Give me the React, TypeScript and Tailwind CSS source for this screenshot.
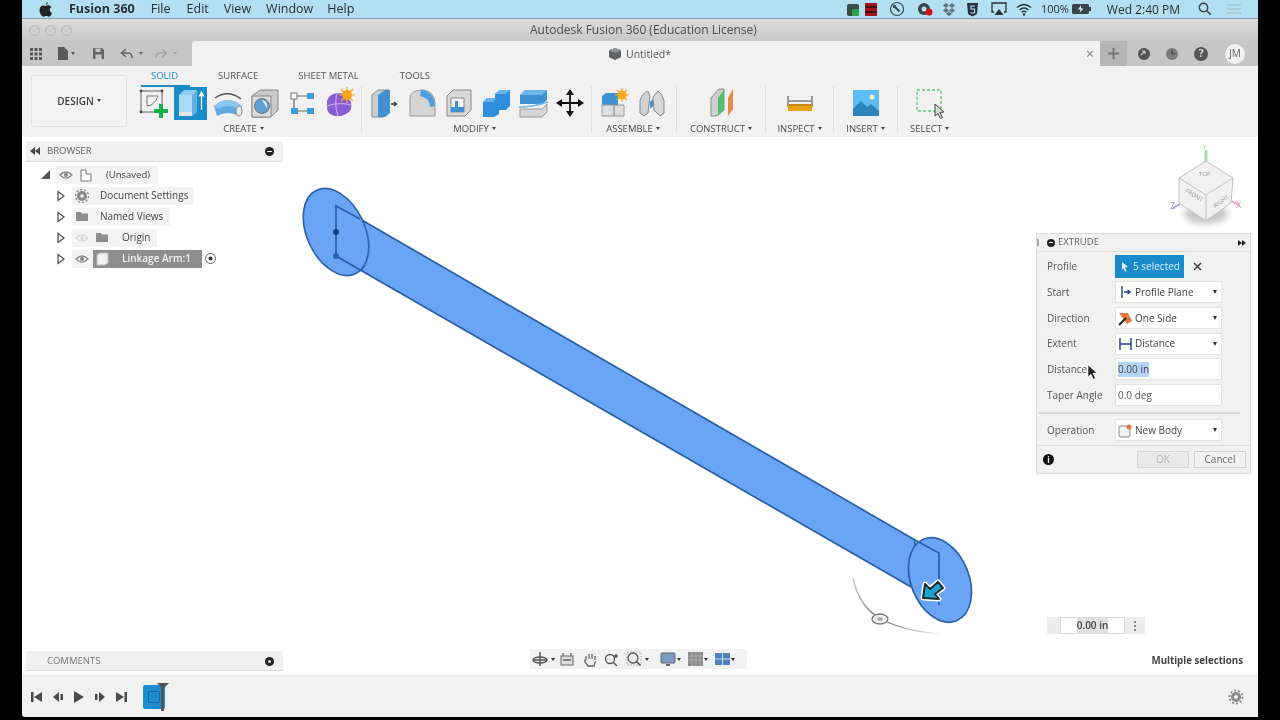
import React from "react";

const font = { fontFamily: '"Open Sans","Liberation Sans",sans-serif' };

type P = { children: React.ReactNode; w?: number; h?: number; vb?: string; className?: string };
const S = ({ children, w = 32, h = 32, vb, className }: P) => (
  <svg width={w} height={h} viewBox={vb ?? `0 0 ${w} ${h}`} className={className ?? "shrink-0"}>
    {children}
  </svg>
);

const Caret = () => <span className="inline-block ml-[3px] mb-[2px] w-0 h-0 border-x-[2.5px] border-x-transparent border-t-[3.5px] border-t-[#444]" />;

const Sketch = () => (
  <S>
    <rect x="3" y="4" width="21" height="21" fill="none" stroke="#666" strokeWidth="1" />
    <path d="M9 9h11M9 9v10q7 0 11-10" fill="none" stroke="#777" strokeWidth="1" />
    <path d="M21 17h4v5h5v4h-5v5h-4v-5h-5v-4h5z" fill="#18b04a" />
    <g fill="#444"><circle cx="3" cy="4" r="1.4" /><circle cx="24" cy="4" r="1.4" /><circle cx="3" cy="25" r="1.4" /></g>
  </S>
);
const Extrude = () => (
  <div className="w-[33px] h-[33px] bg-[#1b8cc8] flex items-center justify-center">
    <S w={30} h={30}>
      <path d="M3 7l5-5h13v22l-5 4H3z" fill="#8fcdf4" />
      <path d="M3 7h13v21H3z" fill="#a9dbf8" />
      <path d="M16 7l5-5v22l-5 4z" fill="#5fb0e4" />
      <path d="M3 24h13v4H3z" fill="#e5e5e5" />
      <path d="M25.5 22V5M23.5 8l2-4 2 4z" stroke="#fff" strokeWidth="1.2" fill="#fff" />
    </S>
  </div>
);
const Revolve = () => (
  <S>
    <path d="M3 11q13-9 26 1" fill="none" stroke="#555" strokeWidth="1.5" />
    <path d="M2 19q14-12 28 0l-3 10q-11-6-22 0z" fill="#5ea9e2" />
    <path d="M2 19q14-12 28 0l-4 3q-10-6-20 0z" fill="#8cc6ef" />
    <ellipse cx="27" cy="24" rx="3" ry="5" fill="#eee" stroke="#888" />
  </S>
);
const Hole = () => (
  <S>
    <path d="M3 9l8-6h18v20l-7 7H3z" fill="#c9c9c9" stroke="#888" />
    <path d="M3 9h19v21H3z" fill="#dcdcdc" stroke="#888" />
    <circle cx="13" cy="19" r="7.5" fill="#5f9fd4" stroke="#777" />
    <path d="M13 13a6 6 0 0 1 5 8z" fill="#d9ecf8" />
  </S>
);
const Pattern = () => (
  <S>
    <rect x="5" y="6" width="6" height="6" fill="#fff" stroke="#777" />
    <rect x="21" y="6" width="7" height="6" fill="#3e9ad8" />
    <rect x="5" y="21" width="7" height="6" fill="#3e9ad8" />
    <rect x="21" y="21" width="7" height="6" fill="#3e9ad8" />
    <path d="M11 9h10M8 12v9M12 24h9" stroke="#666" strokeWidth="1.2" />
  </S>
);
const Form = () => (
  <S>
    <path d="M4 14q2-7 10-8l8 1 6 8q2 9-5 12-7 4-14 1-5-2-5-8z" fill="#8b5bd6" />
    <path d="M4 19q12-4 24-1M14 6q-3 12 1 23" stroke="#c3a8ec" strokeWidth="1.2" fill="none" />
    <circle cx="24" cy="8" r="5" fill="#f7a81c" />
    <path d="M24 0v16M16 8h16M18 2l12 12M30 2L18 14" stroke="#f7a81c" strokeWidth="1.2" />
  </S>
);
const Press = () => (
  <S>
    <path d="M3 8l6-5h11v23l-6 4H3z" fill="#cfcfcf" stroke="#888" />
    <path d="M9 8l7-5h5v23l-5 4H9z" fill="#3e92d4" />
    <path d="M22 17h5M25 15l2.500 2-2.500 2" stroke="#333" strokeWidth="1.3" fill="none" />
  </S>
);
const Fillet = () => (
  <S>
    <path d="M4 29V11q1-8 12-8h2q11 2 11 14v12z" fill="#d5d5d5" stroke="#999" />
    <path d="M15 3q13 1 14 16l-5 1q0-9-10-11z" fill="#4e9ddc" />
  </S>
);
const Shell = () => (
  <S>
    <path d="M4 9l6-6h18v20l-6 6H4z" fill="#d8d8d8" stroke="#888" />
    <path d="M8 11h13v14H8z" fill="#f3f3f3" stroke="#888" />
    <path d="M12 14h3v6h6v5H8v-5h4z" fill="#3e92d4" />
  </S>
);
const Combine = () => (
  <S>
    <path d="M3 15l4-4h8V7l5-4h10v16l-4 4h-7v4l-5 3H3z" fill="#2f8fdc" />
    <path d="M15 7l5-4h10l-4 4zM3 15l4-4h9l-3 4z" fill="#66b4ee" />
  </S>
);
const Split = () => (
  <S>
    <path d="M3 8l5-5h22v10l-5 4H3z" fill="#3e92d4" />
    <path d="M3 8l5-5h22l-5 5z" fill="#6db7ea" />
    <path d="M2 20q14 0 29-5" stroke="#6db7ea" strokeWidth="1.5" fill="none" />
    <path d="M3 22h22l5-5v8l-5 5H3z" fill="#d6d6d6" stroke="#999" />
  </S>
);
const Move = () => (
  <S>
    <path d="M16 4v24M4 16h24" stroke="#111" strokeWidth="1.8" />
    <path d="M16 2l-4 6h8zM16 30l-4-6h8zM2 16l6-4v8zM30 16l-6-4v8z" fill="#111" />
  </S>
);
const NewComp = () => (
  <S>
    <path d="M4 9l4-3h12v12H4z" fill="#3e92d4" />
    <path d="M4 18h12v11H4zM16 18h10v11H16z" fill="#dedede" stroke="#999" />
    <circle cx="24" cy="8" r="4.5" fill="#f7a81c" />
    <path d="M24 1v14M17 8h14M19 3l10 10M29 3L19 13" stroke="#f7a81c" strokeWidth="1.2" />
  </S>
);
const Joint = () => (
  <S>
    <path d="M4 14q2-8 8-10l2 5-2 17-4 3-4-3z" fill="#d0d0d0" stroke="#888" />
    <path d="M28 14q-2-8-6-10l-5 6 1 13 6 6 4-3z" fill="#d8d8d8" stroke="#888" />
    <path d="M14 15l3-3v7l-3 3z" fill="#3e92d4" />
  </S>
);
const Construct = () => (
  <S>
    <path d="M6 11l8-9h5v21l-8 6H6z" fill="#cfcfcf" stroke="#888" />
    <path d="M13 11l6-8v20l-6 6z" fill="#4fbf70" />
    <path d="M23 11l5-9v20l-5 7z" fill="#e58a50" />
  </S>
);
const Inspect = () => (
  <S>
    <path d="M4 9v11M28 9v11M5 14h22" stroke="#444" strokeWidth="1" />
    <path d="M4 17h24v7H4z" fill="#e8a21d" />
    <path d="M4 17h24v2H4z" fill="#c98a12" />
  </S>
);
const Insert = () => (
  <S w={28} h={32} vb="0 0 28 32">
    <rect x="1" y="3" width="26" height="26" fill="#5cbcf5" />
    <circle cx="20" cy="10" r="2.5" fill="#f8f3c2" />
    <path d="M1 22l8-8 6 6 4-3 8 7v5H1z" fill="#2f83bd" />
  </S>
);
const Select = () => (
  <S>
    <rect x="3" y="3" width="24" height="21" fill="none" stroke="#5cc27c" strokeWidth="1.3" strokeDasharray="3 2" />
    <path d="M21 17l9 8-4 .5 2.5 5-2 1-2.5-5-3 2.5z" fill="#d8d8d8" stroke="#444" strokeWidth="1" />
  </S>
);

const Sep = () => <div className="w-px h-[46px] bg-[#dedede] mt-[1px] shrink-0" />;

const Tool = ({ children, w = 37 }: { children: React.ReactNode; w?: number }) => (
  <div className="h-[36px] flex items-center justify-center shrink-0" style={{ width: w }}>
    {children}
  </div>
);

const Group = ({ label, w, left = false, children }: { label: string; w: number; left?: boolean; children: React.ReactNode }) => (
  <div className="flex flex-col items-center shrink-0" style={{ width: w }}>
    <div className="flex justify-center">{children}</div>
    <div className={`text-[9.5px] leading-[12px] mt-[2px] text-[#4a4a4a] whitespace-nowrap flex items-center ${left ? "mr-[5px]" : ""}`}>
      {label}
      <Caret />
    </div>
  </div>
);

const Eye = ({ c = "#8a8a8a" }: { c?: string }) => (
  <S w={14} h={10}>
    <path d="M1 5q6-6 12 0q-6 6-12 0z" fill="none" stroke={c} strokeWidth="1.2" />
    <circle cx="7" cy="5" r="2" fill={c} />
  </S>
);
const Folder = () => (
  <S w={14} h={11}>
    <path d="M1 1h5l1 1.5h6V10H1z" fill="#8d8d8d" />
  </S>
);
const Tri = () => (
  <S w={10} h={12}>
    <path d="M2 1.5l6 4.5-6 4.5z" fill="#fff" stroke="#555" strokeWidth="1.3" />
  </S>
);
const Row = ({ children, w }: { children: React.ReactNode; w: number }) => (
  <div className="h-[21px] flex items-center pl-[30px]">
    <Tri />
    <div className="ml-[6px] h-[18px] bg-[#f3f3f3] flex items-center pl-[2px] text-[10px] text-[#444]" style={{ width: w }}>
      {children}
    </div>
  </div>
);

const Select2 = ({ icon, label }: { icon: React.ReactNode; label: string }) => (
  <div className="w-[107px] h-[22px] bg-white border border-[#e4e4e4] flex items-center pl-[1px] pr-[4px]">
    <div className="w-[17px] flex justify-center">{icon}</div>
    <span className="text-[#444] ml-[1px]">{label}</span>
    <span className="ml-auto w-0 h-0 border-x-[2.5px] border-x-transparent border-t-[4px] border-t-[#333]" />
  </div>
);
const DRow = ({ label, children, h = 26 }: { label: string; children: React.ReactNode; h?: number }) => (
  <div className="flex items-center pl-[10px]" style={{ height: h }}>
    <span className="w-[68px] text-[#555]">{label}</span>
    {children}
  </div>
);

const SmallCaret = ({ cls }: { cls: string }) => (
  <span className={`${cls} w-0 h-0 border-x-[2.5px] border-x-transparent border-t-[3.5px] border-t-[#333]`} />
);

export default function App() {
  return (
    <div className="w-[1280px] h-[720px] bg-black overflow-hidden blur-[0.6px]" style={font}>
      <div className="w-[1236px] h-[717px] ml-[22px] flex flex-col">
        {/* macOS menu bar */}
        <div className="h-[19px] bg-[#b2dff2] border-b border-[#7fa3b5] flex items-center text-[12.5px] text-[#2b2f33] shrink-0 relative">
          <svg width="13" height="15" viewBox="0 0 13 15" className="ml-[17px]">
            <path d="M9 0q.1 2-2.2 3Q6.700 1 9 0zM6.500 4c1 0 1.600-.7 3-.7q1.800 0 2.900 1.600-2 1.200-1.700 3.200t2.300 3q-1.400 3.700-3.100 3.700c-1.100 0-1.500-.7-2.600-.7s-1.600.7-2.600.7C2.600 14.800.5 11 .5 8.300.5 5.200 2.500 3.400 4 3.400c1 0 1.900.6 2.500.6z" fill="#222" />
          </svg>
          <span className="ml-[17px] font-bold pt-[1px]">Fusion 360</span>
          <span className="ml-[16px] pt-[1px]">File</span>
          <span className="ml-[16px] pt-[1px]">Edit</span>
          <span className="ml-[15px] pt-[1px]">View</span>
          <span className="ml-[15px] pt-[1px]">Window</span>
          <span className="ml-[14px] pt-[1px]">Help</span>
          <div className="ml-auto flex items-center pr-[16px]">
            <S w={14} h={15}><rect x="1" y="2" width="12" height="12" rx="2" fill="#3c4b44" /><rect x="6" y="7" width="7" height="7" rx="1" fill="#27a64a" /></S>
            <S w={14} h={15} className="ml-[4px]"><rect x="1" y="1" width="12" height="13" fill="#a4161a" /><path d="M1 5h12M1 10h12" stroke="#2a0808" strokeWidth="1.500" /></S>
            <S w={16} h={16} className="ml-[11px]"><circle cx="8" cy="8" r="6.500" fill="none" stroke="#3a4a55" strokeWidth="1.200" /><path d="M6 6l4.500 4.500" stroke="#3a4a55" strokeWidth="2" /><circle cx="5.500" cy="5.500" r="1.800" fill="#3a4a55" /></S>
            <S w={16} h={16} className="ml-[12px]"><circle cx="7" cy="8" r="6" fill="#3c4248" /><circle cx="7" cy="8" r="2.500" fill="#b2dff2" /><circle cx="12" cy="11" r="3.500" fill="#d0121b" /></S>
            <S w={14} h={14} className="ml-[9px]"><path d="M4 1l3 2.500L4 6 1 3.500zM10 1l3 2.500L10 6 7 3.500zM4 6l3 2.500L4 11 1 8.500zM10 6l3 2.500L10 11 7 8.500zM7 9.500L10 12l-3 2-3-2z" fill="#5d7380" /></S>
            <S w={13} h={15} className="ml-[10px]"><path d="M1 1h11l-1 11-4.500 2.500L2 12z" fill="#28323a" /><path d="M9 4H5v3h3.500v3.500l-2 .7-2-.7" stroke="#b2dff2" strokeWidth="1.200" fill="none" /></S>
            <S w={16} h={14} className="ml-[12px]"><path d="M3 10H1V1h14v9h-2" fill="none" stroke="#28323a" strokeWidth="1.300" /><path d="M8 7l4.500 6h-9z" fill="#28323a" /></S>
            <S w={16} h={13} className="ml-[9px]"><path d="M1 4.500q7-6 14 0M3.500 7q4.500-4 9 0M5.800 9.300q2.200-2 4.400 0" fill="none" stroke="#28323a" strokeWidth="1.400" /><circle cx="8" cy="11.500" r="1.200" fill="#28323a" /></S>
            <span className="ml-[9px] text-[11px]">100%</span>
            <S w={19} h={10} className="ml-[3px]"><rect x="0" y="0" width="17" height="10" rx="1.500" fill="#3a4248" /><rect x="17" y="3" width="2" height="4" fill="#3a4248" /><path d="M9 1L6 5.500h2.500L7.500 9l4-4.500H9z" fill="#d8eef8" /></S>
            <span className="ml-[16px] text-[12px] pt-[1px]">Wed 2:40 PM</span>
            <S w={14} h={14} className="ml-[18px]"><circle cx="5.500" cy="5.500" r="4.200" fill="none" stroke="#3a4248" strokeWidth="1.400" /><path d="M8.800 8.800l4 4" stroke="#3a4248" strokeWidth="1.600" /></S>
            <S w={16} h={12} className="ml-[14px]"><path d="M1 2h14M1 6h14M1 10h14" stroke="#a9c4d0" strokeWidth="1.300" /></S>
          </div>
        </div>

        {/* window title */}
        <div className="h-[22px] bg-gradient-to-b from-[#dcdcdc] to-[#c8c8c8] flex items-center relative shrink-0">
          <div className="flex gap-[5px] ml-[7px]">
            <span className="w-[11px] h-[11px] rounded-full bg-[#cfcfcf] border border-[#b9b9b9]" />
            <span className="w-[11px] h-[11px] rounded-full bg-[#cfcfcf] border border-[#b9b9b9]" />
            <span className="w-[11px] h-[11px] rounded-full bg-[#cfcfcf] border border-[#b9b9b9]" />
          </div>
          <span className="absolute left-[508px] text-[12px] text-[#4c4c4c] whitespace-nowrap">Autodesk Fusion 360 (Education License)</span>
        </div>

        {/* tab row */}
        <div className="h-[25px] bg-[#c6c6c6] flex shrink-0">
          <div className="w-[170px] flex items-center pl-[7px]">
            <S w={14} h={14}>
              <g fill="#555">
                <rect x="1" y="1" width="3" height="3" /><rect x="5.500" y="1" width="3" height="3" /><rect x="10" y="1" width="3" height="3" />
                <rect x="1" y="5.500" width="3" height="3" /><rect x="5.500" y="5.500" width="3" height="3" /><rect x="10" y="5.500" width="3" height="3" />
                <rect x="1" y="10" width="3" height="3" /><rect x="5.500" y="10" width="3" height="3" /><rect x="10" y="10" width="3" height="3" />
              </g>
            </S>
            <S w={12} h={15} className="ml-[14px]"><path d="M1 1h6l4 4v9H1z" fill="#5a5a5a" /></S>
            <span className="ml-[2px] w-0 h-0 border-x-[2.500px] border-x-transparent border-t-[3.500px] border-t-[#555]" />
            <S w={13} h={13} className="ml-[17px]"><path d="M1 1h9l2 2v9H1z" fill="#666" /><rect x="3.500" y="1.500" width="5" height="3.500" fill="#c6c6c6" /><rect x="3.500" y="7.500" width="6" height="4.500" fill="#c6c6c6" /></S>
            <S w={14} h={12} className="ml-[15px]"><path d="M6 1L1.500 5 6 9M2 5h6q4 0 4 5" fill="none" stroke="#666" strokeWidth="1.500" /></S>
            <span className="ml-[5px] w-0 h-0 border-x-[2.500px] border-x-transparent border-t-[3.500px] border-t-[#666]" />
            <S w={14} h={12} className="ml-[11px]"><path d="M8 1l4.500 4L8 9M12 5H6q-4 0-4 5" fill="none" stroke="#a5a5a5" strokeWidth="1.500" /></S>
            <span className="ml-[5px] w-0 h-0 border-x-[2.500px] border-x-transparent border-t-[3.500px] border-t-[#a0a0a0]" />
          </div>
          <div className="w-[908px] bg-[#f2f2f2] rounded-tl-[3px] flex items-center relative">
            <S w={14} h={14} className="ml-[416px] mt-[1px]"><path d="M7 1l6 2.200v7L7 13 1 10.200v-7z" fill="#5f6468" /><path d="M7 6L1 3.200 7 1l6 2.200z" fill="#8d9296" /></S>
            <span className="ml-[4px] mt-[2px] text-[10.5px] text-[#555]">Untitled*</span>
            <span className="ml-auto mr-[6px] mt-[1px] text-[14px] leading-none text-[#777]">×</span>
          </div>
          <div className="flex-1 flex items-center">
            <div className="w-[27px] h-[25px] bg-[#b5b5b5] flex items-center justify-center">
              <S w={13} h={13}><path d="M6.500 1v11M1 6.500h11" stroke="#777" strokeWidth="2" /></S>
            </div>
            <S w={14} h={14} className="ml-[10px]"><circle cx="7" cy="7" r="6" fill="#545454" /><path d="M4 8l4-4M8 4H5M8 4v3" stroke="#c6c6c6" strokeWidth="1.200" fill="none" /></S>
            <S w={14} h={14} className="ml-[14px]"><circle cx="7" cy="7" r="6" fill="#7a7a7a" /><path d="M7 3.500V7h3" stroke="#444" strokeWidth="1.200" fill="none" /></S>
            <div className="ml-[15px] w-[14px] h-[14px] rounded-full bg-[#555] text-[#d8d8d8] text-[11px] font-bold flex items-center justify-center">?</div>
            <div className="ml-[17px] w-[20px] h-[20px] rounded-full bg-[#f2f2f2] text-[#666] text-[10px] flex items-center justify-center">JM</div>
          </div>
        </div>

        {/* ribbon */}
        <div className="h-[71px] bg-[#f1f1f1] flex shrink-0">
          <div className="ml-[9px] mt-[9px] w-[96px] h-[52px] border border-[#e2e2e2] rounded-[3px] bg-[#f3f3f3] flex items-center justify-center pt-[1px] text-[10px] font-semibold text-[#444] shrink-0">
            DESIGN
            <Caret />
          </div>
          <div className="ml-[8px] flex flex-col flex-1">
            <div className="h-[19px] flex items-center pt-[1px] text-[9.5px] text-[#555] whitespace-nowrap">
              <span className="ml-[16px] text-[#1b8cc8]">SOLID</span>
              <span className="ml-[40px]">SURFACE</span>
              <span className="ml-[40px]">SHEET METAL</span>
              <span className="ml-[41px]">TOOLS</span>
            </div>
            <div className="flex relative">
              <div className="absolute left-[6px] top-0 w-[49px] h-[2px] bg-[#1b8cc8]" />
              <Group label="CREATE" w={222} left>
                <Tool><Sketch /></Tool>
                <Tool><Extrude /></Tool>
                <Tool><Revolve /></Tool>
                <Tool><Hole /></Tool>
                <Tool><Pattern /></Tool>
                <Tool><Form /></Tool>
              </Group>
              <div className="w-[4px]" />
              <Sep />
              <div className="w-[4px]" />
              <Group label="MODIFY" w={222} left>
                <Tool><Press /></Tool>
                <Tool><Fillet /></Tool>
                <Tool><Shell /></Tool>
                <Tool><Combine /></Tool>
                <Tool><Split /></Tool>
                <Tool><Move /></Tool>
              </Group>
              <div className="w-[3px]" />
              <Sep />
              <div className="w-[3px]" />
              <Group label="ASSEMBLE" w={76}>
                <Tool w={38}><NewComp /></Tool>
                <Tool w={38}><Joint /></Tool>
              </Group>
              <div className="w-[5px]" />
              <Sep />
              <Group label="CONSTRUCT" w={88}>
                <Tool w={40}><Construct /></Tool>
              </Group>
              <Sep />
              <Group label="INSPECT" w={67}>
                <Tool w={40}><Inspect /></Tool>
              </Group>
              <Sep />
              <Group label="INSERT" w={63}>
                <Tool w={40}><Insert /></Tool>
              </Group>
              <Sep />
              <Group label="SELECT" w={63}>
                <Tool w={40}><Select /></Tool>
              </Group>
            </div>
          </div>
        </div>

        {/* canvas */}
        <div className="flex-1 bg-white relative min-h-0">
          {/* 3D model */}
          <svg className="absolute left-0 top-0" width="1236" height="538" viewBox="22 137 1236 538">
            <defs>
              <linearGradient id="arc" x1="0" y1="0" x2="1" y2="0">
                <stop offset="0" stopColor="#c4c4c4" />
                <stop offset="0.3" stopColor="#666" />
                <stop offset="1" stopColor="#fff" />
              </linearGradient>
            </defs>
            <path d="M853 578q6 30 30 42q24 12 60 14" fill="none" stroke="url(#arc)" strokeWidth="1.300" />
            <ellipse cx="880" cy="619" rx="8" ry="5" fill="#eee" stroke="#777" strokeWidth="1.300" />
            <ellipse cx="880" cy="619" rx="3" ry="1.800" fill="#aaa" />
            <path d="M360 219L915 540L913 588L362 271z" fill="#6aa4f5" stroke="#2660a8" strokeWidth="1.700" />
            <ellipse cx="940" cy="580" rx="29" ry="44" transform="rotate(-22 940 580)" fill="#6aa4f5" stroke="#2a62ab" strokeWidth="1.700" />
            <ellipse cx="336" cy="232" rx="29" ry="46" transform="rotate(-25 336 232)" fill="#6aa4f5" stroke="#2a62ab" strokeWidth="1.700" />
            <path d="M360 219L336 206V256L362 271" fill="none" stroke="#2660a8" strokeWidth="1.700" />
            <path d="M915 540L939 553V605" fill="none" stroke="#2660a8" strokeWidth="1.700" />
            <circle cx="336" cy="232" r="3" fill="#16407c" />
            <circle cx="336" cy="256" r="3" fill="#2a62ab" />
            <path d="M923 598L925 584L930 589L938 582L943 588L935 594L939 599Z" fill="#fff" stroke="#fff" strokeWidth="5" strokeLinejoin="round" />
            <path d="M923 598L925 584L930 589L938 582L943 588L935 594L939 599Z" fill="#1ea3cf" stroke="#1d2b33" strokeWidth="2" strokeLinejoin="round" />
            {/* view cube */}
            <ellipse cx="1206" cy="214" rx="22" ry="10" fill="#c8c8c8" className="blur-[3px]" />
            <path d="M1206 164v-14" stroke="#9fe3ac" strokeWidth="3" />
            <path d="M1180 204l-7 4" stroke="#9f9be6" strokeWidth="1.500" />
            <path d="M1232 201l8 5" stroke="#eda9b5" strokeWidth="2" />
            <path d="M1179 178l27-17 27 17-2 25-25 18-27-18z" fill="#f1f1f1" stroke="#c0c0c0" />
            <path d="M1179 178l27 17 27-17M1206 195v26" fill="none" stroke="#c0c0c0" />
            <text x="1199" y="176" fontSize="6" fill="#999">TOP</text>
            <text x="1184" y="195" fontSize="6" fill="#999" transform="rotate(30 1190 195)">FRONT</text>
            <text x="1211" y="205" fontSize="6" fill="#999" transform="rotate(-35 1218 200)">RIGHT</text>
            <text x="1203" y="149" fontSize="6" fill="#7fd58e">Y</text>
            <text x="1170" y="209" fontSize="9" fill="#8f8ae0">Z</text>
            <text x="1236" y="208" fontSize="9" fill="#e493a4">X</text>
          </svg>

          {/* browser */}
          <div className="absolute left-[4px] top-[4px] w-[257px] text-[#555]">
            <div className="h-[21px] bg-[#f0f0f0] border-b border-[#dcdcdc] flex items-center text-[9.5px]">
              <S w={10} h={8} className="ml-[4px]"><path d="M5 0v8L0 4zM10 0v8L5 4z" fill="#444" /></S>
              <span className="ml-[7px] text-[#666]">BROWSER</span>
              <span className="ml-auto mr-[9px] w-[9px] h-[9px] rounded-full bg-[#222] flex items-center justify-center"><span className="w-[5px] h-[1px] bg-white" /></span>
            </div>
            <div className="mt-[2px]">
              <div className="h-[21px] flex items-center pl-[14px]">
                <S w={12} h={11}><path d="M1 10L10 1v9z" fill="#555" /></S>
                <div className="ml-[4px] w-[102px] h-[18px] bg-[#f3f3f3] flex items-center pl-[3px] text-[9.5px] text-[#444]">
                  <Eye />
                  <S w={14} h={14} className="ml-[6px]"><path d="M2 2h5v4h5v7H2z" fill="#fff" stroke="#777" /></S>
                  <span className="ml-[13px] pt-[1px]">(Unsaved)</span>
                </div>
              </div>
              <Row w={122}>
                <S w={14} h={14} className="ml-[1px]"><circle cx="7" cy="7" r="5" fill="#8a8a8a" /><circle cx="7" cy="7" r="6.500" fill="none" stroke="#8a8a8a" strokeWidth="1.500" strokeDasharray="2 2" /><circle cx="7" cy="7" r="1.800" fill="#f3f3f3" /></S>
                <span className="ml-[11px]">Document Settings</span>
              </Row>
              <Row w={98}>
                <span className="ml-[1px] flex"><Folder /></span>
                <span className="ml-[11px]">Named Views</span>
              </Row>
              <Row w={85}>
                <span className="ml-[1px] flex"><Eye c="#dcdcdc" /></span>
                <span className="ml-[6px] flex"><Folder /></span>
                <span className="ml-[13px]">Origin</span>
              </Row>
              <div className="h-[21px] flex items-center pl-[30px]">
                <Tri />
                <div className="ml-[6px] w-[130px] h-[18px] bg-[#f3f3f3] flex items-center pl-[3px] text-[10px]">
                  <Eye />
                  <div className="ml-[4px] w-[109px] h-[18px] bg-[#8e8e8e] flex items-center pl-[3px]">
                    <S w={13} h={14}><path d="M1 3l3-2h8v10l-3 2H1z" fill="#f2f2f2" stroke="#bbb" /></S>
                    <span className="ml-[13px] font-semibold text-[#f2f2f2] whitespace-nowrap">Linkage Arm:1</span>
                  </div>
                </div>
                <S w={13} h={13} className="ml-[2px]"><circle cx="6.500" cy="6.500" r="5" fill="#fff" stroke="#666" /><circle cx="6.500" cy="6.500" r="2" fill="#333" /></S>
              </div>
            </div>
          </div>

          {/* extrude dialog */}
          <div className="absolute left-[1014px] top-[96px] w-[215px] h-[241px] bg-[#f1f1f1] border border-[#dcdcdc] text-[10px] flex flex-col">
            <div className="h-[18px] border-b border-[#dddddd] flex items-center shrink-0">
              <span className="w-[2px] h-[7px] bg-[#aaa]" />
              <span className="ml-[8px] w-[8px] h-[8px] rounded-full bg-[#222] flex items-center justify-center"><span className="w-[4px] h-[1px] bg-white" /></span>
              <span className="ml-[3px] text-[#666] text-[9.5px]">EXTRUDE</span>
              <S w={8} h={6} className="ml-auto mr-[4px]"><path d="M0 0v6l4-3zM4 0v6l4-3z" fill="#222" /></S>
            </div>
            <div className="pt-[1px]">
              <DRow label="Profile">
                <div className="w-[69px] h-[23px] bg-[#1a8ccb] text-[#d9eef9] flex items-center pl-[6px]">
                  <S w={8} h={11}><path d="M1 1l6 5-3 .3L5.500 10l-1.500.7L2.500 7 1 9z" fill="#e8f3fa" /></S>
                  <span className="ml-[4px] whitespace-nowrap">5 selected</span>
                </div>
                <S w={9} h={9} className="ml-[9px]"><path d="M1 1l7 7M8 1L1 8" stroke="#333" strokeWidth="1.400" /></S>
              </DRow>
              <DRow label="Start">
                <Select2 label="Profile Plane" icon={<S w={12} h={14}><path d="M2 1v12M4 7h6M7.500 5l2.500 2-2.500 2" stroke="#25477a" strokeWidth="1.400" fill="none" /></S>} />
              </DRow>
              <DRow label="Direction">
                <Select2 label="One Side" icon={<S w={15} h={15}><path d="M1 2h9l4 8-5 3z" fill="#e2773f" /><path d="M1 14l7-7" stroke="#222" strokeWidth="2" /></S>} />
              </DRow>
              <DRow label="Extent" h={25}>
                <Select2 label="Distance" icon={<S w={13} h={14}><path d="M1 1v12M12 1v12M1.500 7h10" stroke="#25477a" strokeWidth="1.500" /></S>} />
              </DRow>
              <DRow label="Distance">
                <div className="w-[107px] h-[22px] bg-white border border-[#e4e4e4] flex items-center pl-[2px] text-[#444]">
                  <span className="bg-[#b5d5f7]">0.00 in</span>
                </div>
              </DRow>
              <DRow label="Taper Angle">
                <div className="w-[107px] h-[22px] bg-white border border-[#e4e4e4] flex items-center pl-[2px] text-[#555]">0.0 deg</div>
              </DRow>
            </div>
            <div className="mt-[4px] ml-[2px] w-[201px] h-[2px] bg-[#d6d6d6]" />
            <div className="mt-[3px]">
              <DRow label="Operation">
                <Select2 label="New Body" icon={<S w={15} h={15}><rect x="1" y="3" width="11" height="11" rx="2" fill="#f2f2f2" stroke="#888" /><circle cx="11" cy="4" r="2.500" fill="#e2773f" /></S>} />
              </DRow>
            </div>
            <div className="mt-[2px] border-t border-[#dddddd] flex-1 flex items-center pl-[6px] pr-[4px]">
              <span className="w-[11px] h-[11px] rounded-full bg-[#111] text-white text-[8px] font-bold flex items-center justify-center">i</span>
              <div className="ml-auto w-[52px] h-[17px] bg-[#e9e9e9] border border-[#d8d8d8] text-[#b5b5b5] flex items-center justify-center">OK</div>
              <div className="ml-[5px] w-[52px] h-[17px] bg-[#f2f2f2] border border-[#d0d0d0] text-[#666] flex items-center justify-center">Cancel</div>
            </div>
          </div>

          {/* mouse pointer */}
          <S w={12} h={16} className="absolute left-[1065px] top-[227px]"><path d="M1 1l9 8-4 .3 2.500 5-2 1L4 10.300 1 13z" fill="#222" stroke="#fff" strokeWidth="0.600" /></S>

          {/* floating value */}
          <div className="absolute left-[1025px] top-[480px] w-[98px] h-[17px] bg-[#ececec] flex items-center text-[10px] font-semibold text-[#444]">
            <div className="ml-[13px] w-[65px] h-[17px] bg-white border border-[#dcdcdc] flex items-center justify-center">
              <span className="bg-[#e2e2e2]">0.00 in</span>
            </div>
            <div className="ml-[9px] flex flex-col gap-[2px]">
              <span className="w-[2px] h-[2px] rounded-full bg-[#666]" />
              <span className="w-[2px] h-[2px] rounded-full bg-[#666]" />
              <span className="w-[2px] h-[2px] rounded-full bg-[#666]" />
            </div>
          </div>

          {/* comments */}
          <div className="absolute left-[4px] bottom-[4px] w-[257px] h-[20px] bg-[#f0f0f0] border-b border-[#dcdcdc] flex items-center pt-[1px] text-[9.5px] text-[#777]">
            <span className="ml-[21px]">COMMENTS</span>
            <span className="ml-auto mr-[9px] w-[9px] h-[9px] rounded-full bg-[#222] flex items-center justify-center"><span className="w-[3px] h-[3px] rounded-full bg-[#ddd]" /></span>
          </div>

          {/* nav bar */}
          <div className="absolute left-[508px] bottom-[6px] w-[217px] h-[20px] bg-[#f2f2f2] flex items-center pl-[1px]">
            <S w={18} h={18}><path d="M9 2v14M2 10h14" stroke="#555" strokeWidth="1.500" /><ellipse cx="9" cy="10" rx="7" ry="3" fill="none" stroke="#555" strokeWidth="1.500" /></S>
            <SmallCaret cls="ml-[2px]" />
            <S w={16} h={16} className="ml-[4px]"><rect x="2" y="5" width="12" height="9" fill="#ddd" stroke="#666" /><path d="M4 2v3M12 2v3M4 9h8" stroke="#666" strokeWidth="1.300" /></S>
            <S w={16} h={16} className="ml-[7px]"><path d="M4 9V5M7 8V3M10 8V3M13 9V5M4 9q-2 0-1 2l3 4h6l1.500-5" fill="#eee" stroke="#666" strokeWidth="1.300" /></S>
            <S w={17} h={16} className="ml-[5px]"><circle cx="7" cy="8" r="4.500" fill="#eee" stroke="#555" strokeWidth="1.300" /><path d="M10 11l4 4M13 3v4M11 5h4" stroke="#555" strokeWidth="1.400" /></S>
            <S w={17} h={16} className="ml-[6px]"><rect x="1" y="1" width="14" height="13" fill="none" stroke="#aaa" strokeDasharray="1.500 1.500" /><circle cx="7" cy="7" r="5" fill="#eee" stroke="#555" strokeWidth="1.300" /><path d="M10.500 10.500l4 4" stroke="#555" strokeWidth="1.600" /></S>
            <SmallCaret cls="ml-[2px]" />
            <S w={17} h={16} className="ml-[11px]"><rect x="1" y="2" width="14" height="10" rx="1" fill="#7c9cc4" stroke="#666" /><path d="M6 14h4" stroke="#666" strokeWidth="2" /></S>
            <SmallCaret cls="ml-0" />
            <S w={17} h={16} className="ml-[6px]"><rect x="1" y="1" width="15" height="14" fill="#8b8b8b" /><path d="M5 1v14M9 1v14M13 1v14M1 5h15M1 9h15" stroke="#bbb" strokeWidth="0.700" /></S>
            <SmallCaret cls="ml-0" />
            <S w={17} h={16} className="ml-[6px]"><rect x="1" y="2" width="15" height="12" fill="#4d82bd" /><path d="M8.500 2v12M1 8h15" stroke="#c8d9ec" strokeWidth="1" /></S>
            <SmallCaret cls="ml-0" />
          </div>

          <span className="absolute right-[15px] bottom-[6px] text-[9.7px] font-bold text-[#444]">Multiple selections</span>
        </div>

        {/* timeline */}
        <div className="h-[42px] bg-[#f1f1f1] border-t border-[#e6e6e6] flex items-center shrink-0 pl-[8px] rounded-bl-[3px]">
          <S w={13} h={12}><path d="M1 1h2.500v10H1zM12 1v10L4 6z" fill="#4a4a4a" /></S>
          <S w={12} h={12} className="ml-[9px]"><path d="M7 1v10L1 6zM8.500 3h2.500v6H8.500z" fill="#4a4a4a" /></S>
          <S w={12} h={14} className="ml-[9px]"><path d="M1 1v12l10-6z" fill="#4a4a4a" /></S>
          <S w={12} h={12} className="ml-[9px]"><path d="M5 1v10l6-5zM1 3h2.500v6H1z" fill="#4a4a4a" /></S>
          <S w={13} h={12} className="ml-[9px]"><path d="M9.500 1H12v10H9.500zM1 1v10l8-5z" fill="#4a4a4a" /></S>
          <div className="ml-[15px] relative w-[22px] h-[24px] bg-[#1b8fd2] rounded-[2px] flex items-center justify-center">
            <span className="w-[12px] h-[12px] border border-[#1766a0] rounded-[2px]" />
            <span className="absolute right-[1px] top-[-1px] w-[3px] h-[27px] bg-[#555]" />
            <span className="absolute right-[-4px] top-[-2px] w-0 h-0 border-x-[6px] border-x-transparent border-t-[6px] border-t-[#555]" />
          </div>
          <S w={16} h={16} className="ml-auto mr-[14px]"><circle cx="8" cy="8" r="5" fill="#8a8a8a" /><circle cx="8" cy="8" r="6.500" fill="none" stroke="#8a8a8a" strokeWidth="1.800" strokeDasharray="2 2" /><circle cx="8" cy="8" r="2" fill="#f1f1f1" /></S>
        </div>
      </div>
    </div>
  );
}
